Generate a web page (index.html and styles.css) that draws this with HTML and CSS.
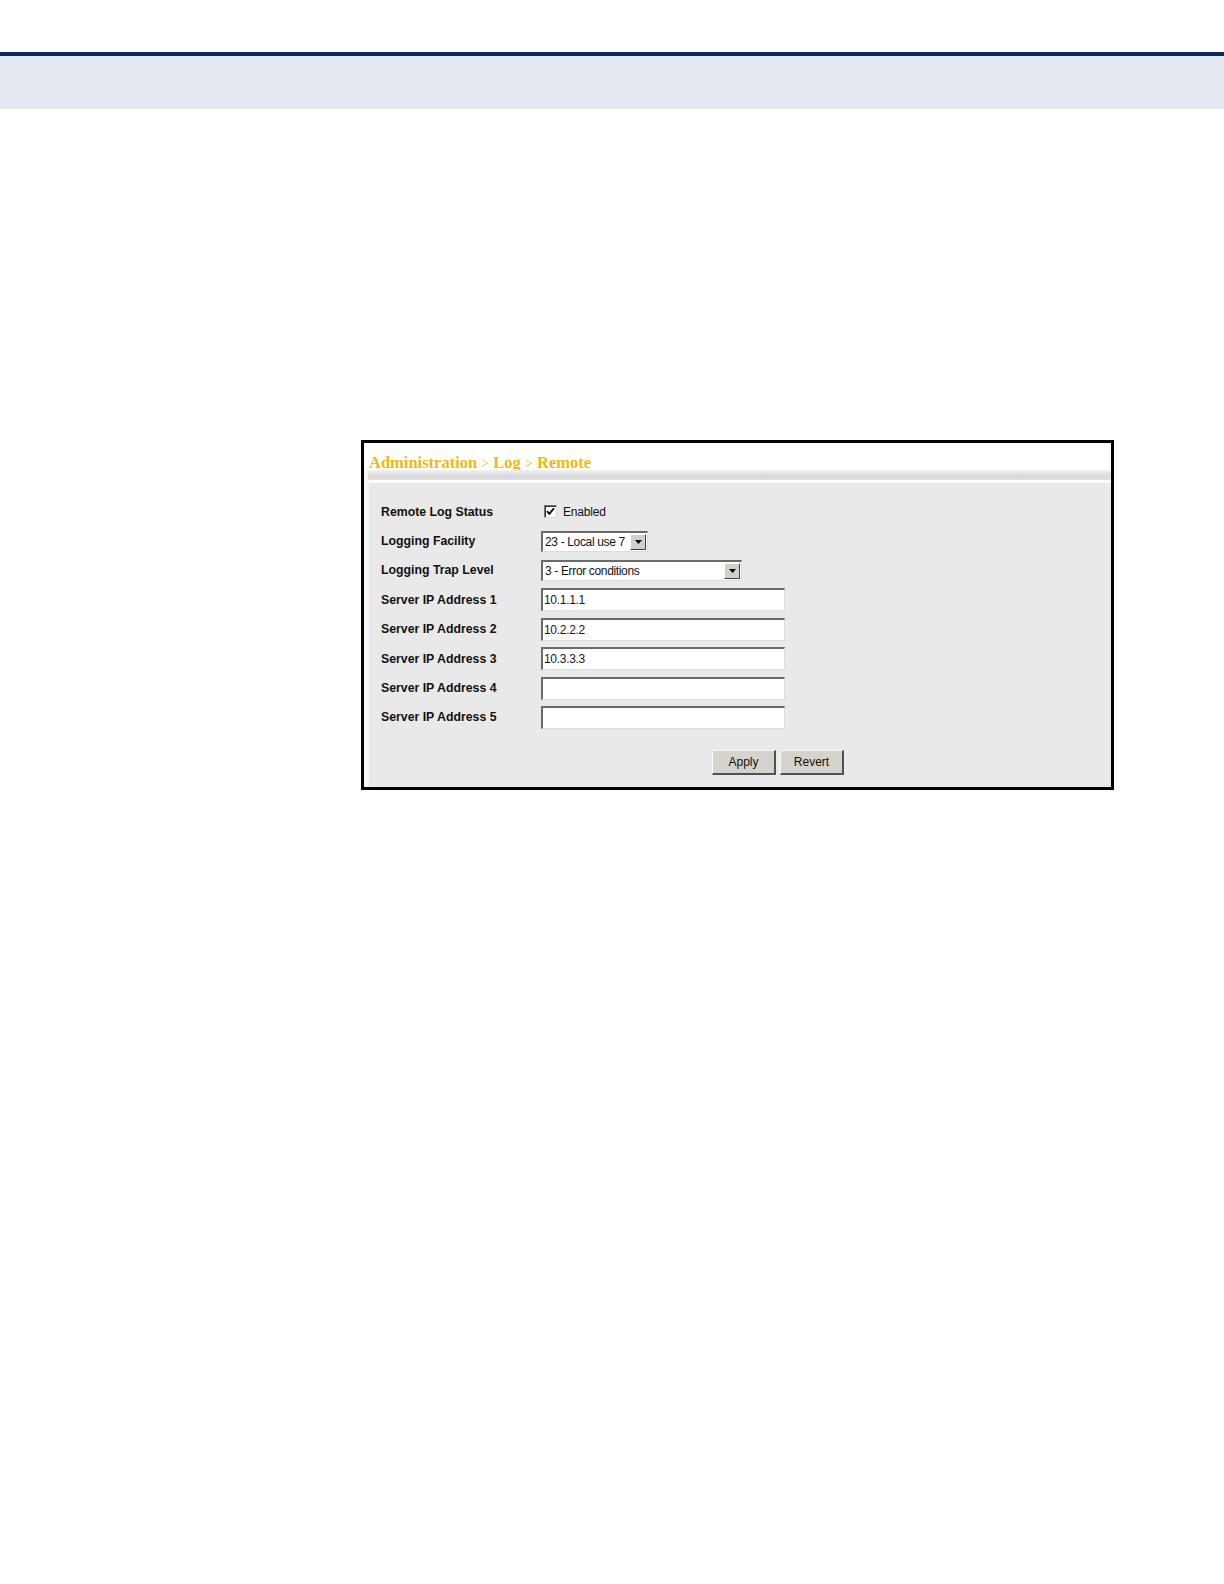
FILE: index.html
```html
<!DOCTYPE html>
<html>
<head>
<meta charset="utf-8">
<link rel="stylesheet" href="styles.css">
</head>
<body>
<div class="header-band"></div>
<div class="frame">
  <div class="title-bar">Administration <span class="sep">&gt;</span> Log <span class="sep">&gt;</span> Remote</div>
  <div class="shadow"></div>
  <div class="white-line"></div>
  <div class="panel">
    <div class="form">
      <div class="row">
        <div class="label">Remote Log Status</div>
        <div class="ctrl">
          <span class="checkbox"><svg width="9" height="9" viewBox="0 0 9 9"><path d="M1 4.2 L3.4 6.8 L8 1.2" fill="none" stroke="#000" stroke-width="1.8"/></svg></span>
          <span class="cb-text">Enabled</span>
        </div>
      </div>
      <div class="row">
        <div class="label">Logging Facility</div>
        <div class="ctrl">
          <div class="select sel-short"><span class="sel-text">23 - Local use 7</span><span class="arrow"><svg width="7" height="4" viewBox="0 0 7 4"><path d="M0 0 H7 L3.5 4 Z" fill="#000"/></svg></span></div>
        </div>
      </div>
      <div class="row">
        <div class="label">Logging Trap Level</div>
        <div class="ctrl">
          <div class="select sel-long"><span class="sel-text">3 - Error conditions</span><span class="arrow"><svg width="7" height="4" viewBox="0 0 7 4"><path d="M0 0 H7 L3.5 4 Z" fill="#000"/></svg></span></div>
        </div>
      </div>
      <div class="row">
        <div class="label">Server IP Address 1</div>
        <div class="ctrl"><div class="input">10.1.1.1</div></div>
      </div>
      <div class="row">
        <div class="label">Server IP Address 2</div>
        <div class="ctrl"><div class="input">10.2.2.2</div></div>
      </div>
      <div class="row">
        <div class="label">Server IP Address 3</div>
        <div class="ctrl"><div class="input">10.3.3.3</div></div>
      </div>
      <div class="row">
        <div class="label">Server IP Address 4</div>
        <div class="ctrl"><div class="input"></div></div>
      </div>
      <div class="row">
        <div class="label">Server IP Address 5</div>
        <div class="ctrl"><div class="input"></div></div>
      </div>
    </div>
    <div class="buttons">
      <div class="btn btn-apply">Apply</div>
      <div class="btn btn-revert">Revert</div>
    </div>
  </div>
</div>
</body>
</html>
```
FILE: styles.css
```css
html, body {
  margin: 0;
  padding: 0;
  background: #ffffff;
}
body {
  width: 1224px;
  height: 1584px;
  font-family: "Liberation Sans", Arial, sans-serif;
}
.header-band {
  margin-top: 52px;
  height: 53px;
  border-top: 4px solid #0b2562;
  background: #e5e8f0;
}
.frame {
  margin-top: 331px;
  margin-left: 361px;
  width: 753px;
  height: 350px;
  box-sizing: border-box;
  border: 3px solid #000;
  background: #f6f6f6;
  display: flex;
  flex-direction: column;
}
.title-bar {
  height: 27px;
  box-sizing: border-box;
  padding-top: 12px;
  padding-left: 5px;
  line-height: 15px;
  background: #ffffff;
  font-family: "Liberation Serif", "Times New Roman", serif;
  font-weight: bold;
  font-size: 16.5px;
  color: #f4b70f;
  white-space: nowrap;
}
.title-bar .sep {
  font-weight: normal;
  font-size: 14px;
}
.shadow {
  height: 10px;
  margin-left: 4px;
  background: linear-gradient(#f3f3f3, #dadada 55%, #dedede);
}
.white-line {
  height: 3px;
  background: #fbfbfb;
}
.panel {
  flex: 1;
  margin-left: 5px;
  background: #e9e9e9;
  padding-top: 14px;
  padding-left: 12px;
}
.form {
  display: flex;
  flex-direction: column;
}
.row {
  height: 29.4px;
  display: flex;
  align-items: center;
}
.label {
  width: 160px;
  font-weight: bold;
  font-size: 12.3px;
  color: #111;
  white-space: nowrap;
}
.ctrl {
  display: flex;
  align-items: center;
}
.checkbox {
  width: 13px;
  height: 13px;
  box-sizing: border-box;
  margin-left: 3px;
  border-top: 1px solid #707070;
  border-left: 1px solid #707070;
  border-right: 1px solid #d8d8d8;
  border-bottom: 1px solid #d8d8d8;
  box-shadow: inset 1px 1px 0 #303030;
  background: #fff;
  display: flex;
  align-items: center;
  justify-content: center;
}
.cb-text {
  margin-left: 6px;
  font-size: 12px;
  letter-spacing: -0.2px;
  color: #111;
}
.select {
  height: 21px;
  box-sizing: border-box;
  border-top: 2px solid #6a6a6a;
  border-left: 2px solid #6a6a6a;
  border-right: 1px solid #dcdcdc;
  border-bottom: 1px solid #dcdcdc;
  background: #fff;
  display: flex;
  align-items: center;
  justify-content: space-between;
}
.sel-short { width: 107px; }
.sel-long { width: 201px; }
.sel-text {
  font-size: 12px;
  letter-spacing: -0.35px;
  color: #111;
  padding-left: 2px;
  white-space: nowrap;
}
.arrow {
  width: 16px;
  height: 16px;
  box-sizing: border-box;
  margin-right: 1px;
  background: #d4d0c8;
  border-top: 1px solid #fff;
  border-left: 1px solid #fff;
  border-right: 1px solid #404040;
  border-bottom: 1px solid #404040;
  display: flex;
  align-items: center;
  justify-content: center;
}
.input {
  width: 244px;
  height: 23px;
  box-sizing: border-box;
  border-top: 2px solid #6a6a6a;
  border-left: 2px solid #6a6a6a;
  border-right: 1px solid #dcdcdc;
  border-bottom: 1px solid #dcdcdc;
  background: #fff;
  font-size: 12px;
  letter-spacing: -0.3px;
  line-height: 20px;
  color: #1a1420;
  padding-left: 1px;
}
.buttons {
  display: flex;
  gap: 4px;
  margin-top: 18px;
  margin-left: 331px;
}
.btn {
  height: 25px;
  box-sizing: border-box;
  background: #d6d3cc;
  border-top: 1px solid #fafafa;
  border-left: 1px solid #fafafa;
  border-right: 2px solid #505050;
  border-bottom: 2px solid #505050;
  font-size: 12px;
  color: #111;
  display: flex;
  align-items: center;
  justify-content: center;
}
.btn-apply { width: 64px; }
.btn-revert { width: 64px; }
```
